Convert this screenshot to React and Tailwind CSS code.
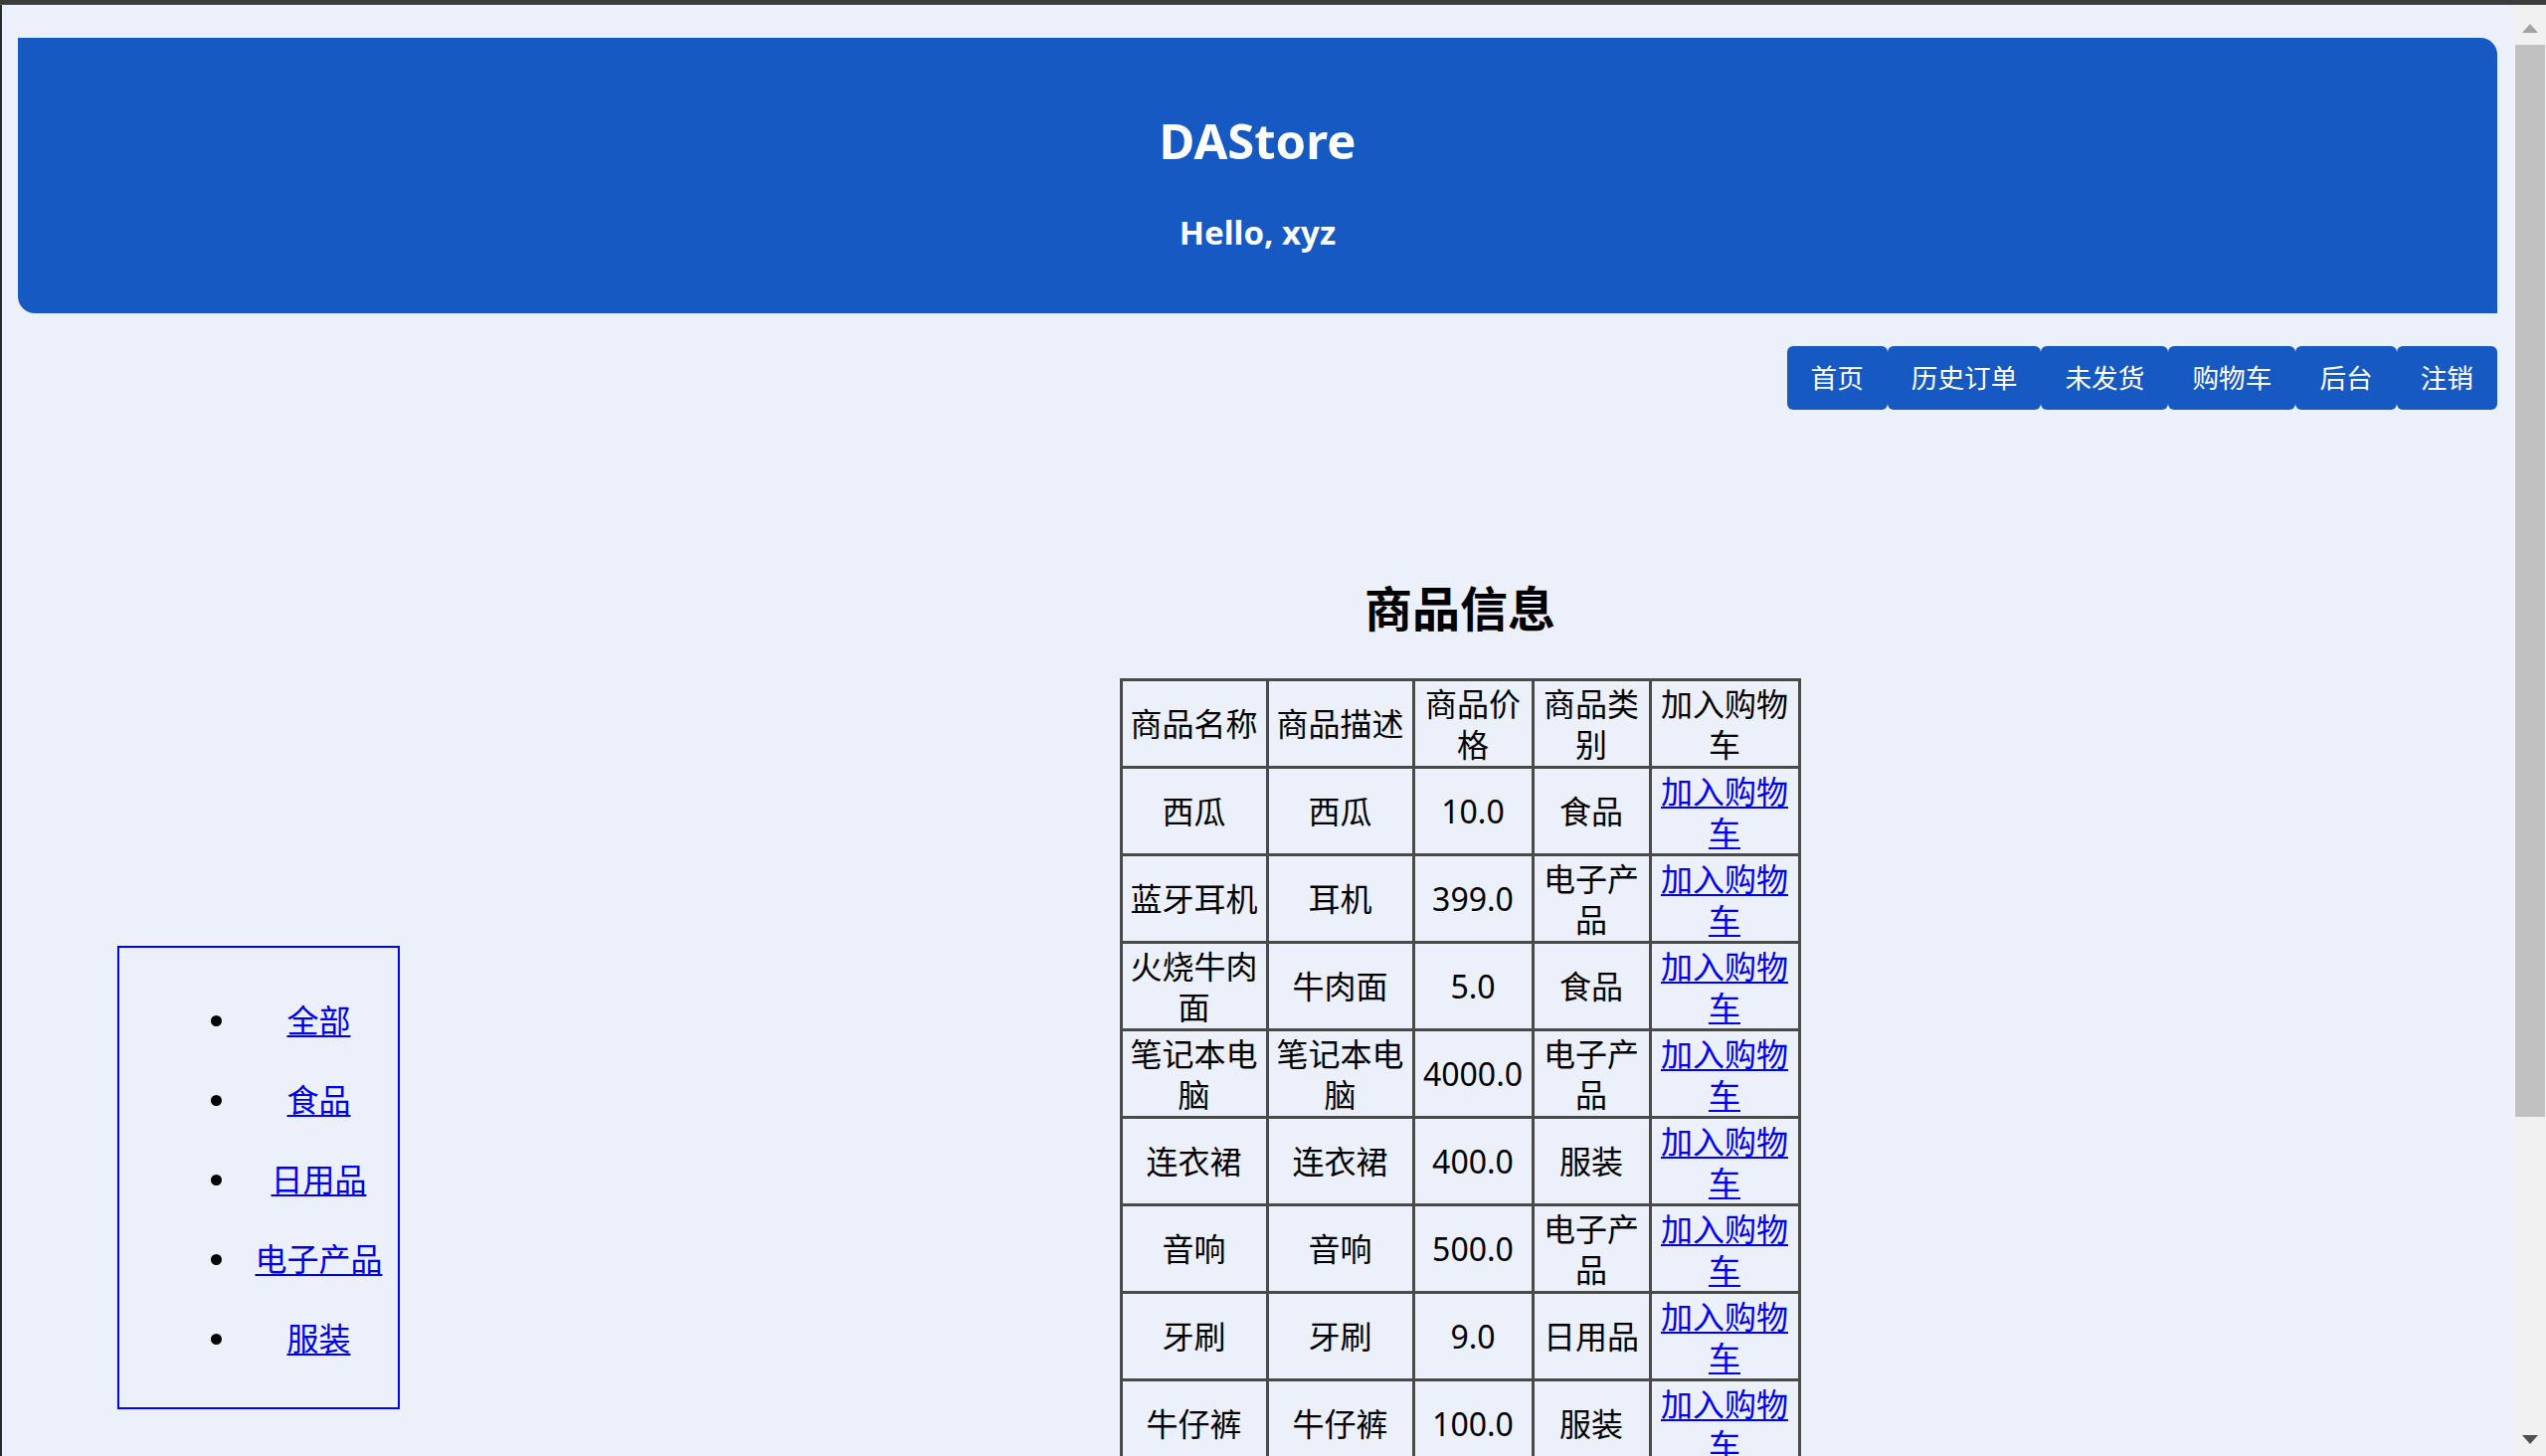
import React from 'react';

// 商品列表
const products = [
  { name: '西瓜', desc: '西瓜', price: '10.0', type: '食品' },
  { name: '蓝牙耳机', desc: '耳机', price: '399.0', type: '电子产品' },
  { name: '火烧牛肉面', desc: '牛肉面', price: '5.0', type: '食品' },
  { name: '笔记本电脑', desc: '笔记本电脑', price: '4000.0', type: '电子产品' },
  { name: '连衣裙', desc: '连衣裙', price: '400.0', type: '服装' },
  { name: '音响', desc: '音响', price: '500.0', type: '电子产品' },
  { name: '牙刷', desc: '牙刷', price: '9.0', type: '日用品' },
  { name: '牛仔裤', desc: '牛仔裤', price: '100.0', type: '服装' },
];

const navItems = ['首页', '历史订单', '未发货', '购物车', '后台', '注销'];
const categories = ['全部', '食品', '日用品', '电子产品', '服装'];

const font = "font-['Noto_Sans','Noto_Sans_CJK_SC',sans-serif]";
const cell = 'border-[3px] border-[#4a4a4a] px-[2px] py-[1.5px] text-center align-middle leading-[41px]';

function Scrollbar() {
  return (
    <div className="w-[33px] bg-[#f1f1f1] flex flex-col items-center">
      <svg width="16" height="9" viewBox="0 0 16 9" className="mt-[19px]">
        <path d="M8 0 L16 9 L0 9 Z" fill="#a3a3a3" />
      </svg>
      <div className="w-[30px] h-[1078px] bg-[#c1c1c1] mt-[12px]" />
      <div className="flex-1" />
      <svg width="16" height="9" viewBox="0 0 16 9" className="mb-[12px]">
        <path d="M0 0 L16 0 L8 9 Z" fill="#505050" />
      </svg>
    </div>
  );
}

export default function App() {
  return (
    <div className={`h-[1464px] w-full overflow-hidden flex flex-col bg-[#3c3c3c] ${font}`}>
      <div className="h-[4px] bg-[#3c3c3c]" />
      <div className="h-[1px] bg-[#555555]" />
      <div className="flex flex-1 min-h-0">
        <div className="w-[2px] bg-[#2b2b2b]" />
        <div className="flex-1 bg-[#ecf0fb] overflow-hidden px-[16px] pt-[33px]">
          {/* En-tête */}
          <div className="h-[277px] bg-[#1759c2] rounded-tr-[17px] rounded-bl-[17px] flex flex-col items-center text-white">
            <h1 className="mt-[74px] text-[49px] font-bold leading-[58px]">DAStore</h1>
            <h3 className="mt-[44px] text-[33px] font-bold leading-[40px]">Hello, xyz</h3>
          </div>

          {/* Navigation */}
          <div className="flex justify-end mt-[33px]">
            {navItems.map((item) => (
              <button
                key={item}
                className="h-[64px] px-[24px] bg-[#1759c2] text-white text-[26.67px] rounded-[6px] leading-[36px]"
              >
                {item}
              </button>
            ))}
          </div>

          <div className="flex items-start">
            {/* Catégories */}
            <div className="ml-[100px] mt-[539px] w-[284px] h-[466px] border-2 border-[#0000ff] pt-[33px]">
              {categories.map((c) => (
                <div key={c} className="flex items-center h-[80px]">
                  <span className="ml-[92px] w-[11px] h-[11px] rounded-full bg-black" />
                  <div className="flex-1 text-center pl-[18px]">
                    <a href="#" className="text-[32px] leading-[40px] text-[#0000ee] underline underline-offset-[3px] decoration-[2px]">
                      {c}
                    </a>
                  </div>
                </div>
              ))}
            </div>

            {/* Produits */}
            <div className="flex-1 ml-[23px] flex flex-col items-center pt-[171px]">
              <h2 className="text-[48px] font-bold leading-[58px] text-black">商品信息</h2>
              <table className="mt-[41px] table-fixed border-collapse text-[32px] text-black w-[682px]">
                <colgroup>
                  <col className="w-[147px]" />
                  <col className="w-[147px]" />
                  <col className="w-[120px]" />
                  <col className="w-[118px]" />
                  <col className="w-[150px]" />
                </colgroup>
                <tbody>
                  <tr>
                    <td className={cell}>商品名称</td>
                    <td className={cell}>商品描述</td>
                    <td className={cell}>商品价格</td>
                    <td className={cell}>商品类别</td>
                    <td className={cell}>加入购物车</td>
                  </tr>
                  {products.map((p, idx) => (
                    <tr key={idx}>
                      <td className={cell}>{p.name}</td>
                      <td className={cell}>{p.desc}</td>
                      <td className={cell}>{p.price}</td>
                      <td className={cell}>{p.type}</td>
                      <td className={cell}>
                        <a href="#" className="text-[#0000ee] underline underline-offset-[3px] decoration-[2px]">加入购物车</a>
                      </td>
                    </tr>
                  ))}
                </tbody>
              </table>
            </div>
          </div>
        </div>
        <Scrollbar />
      </div>
    </div>
  );
}
